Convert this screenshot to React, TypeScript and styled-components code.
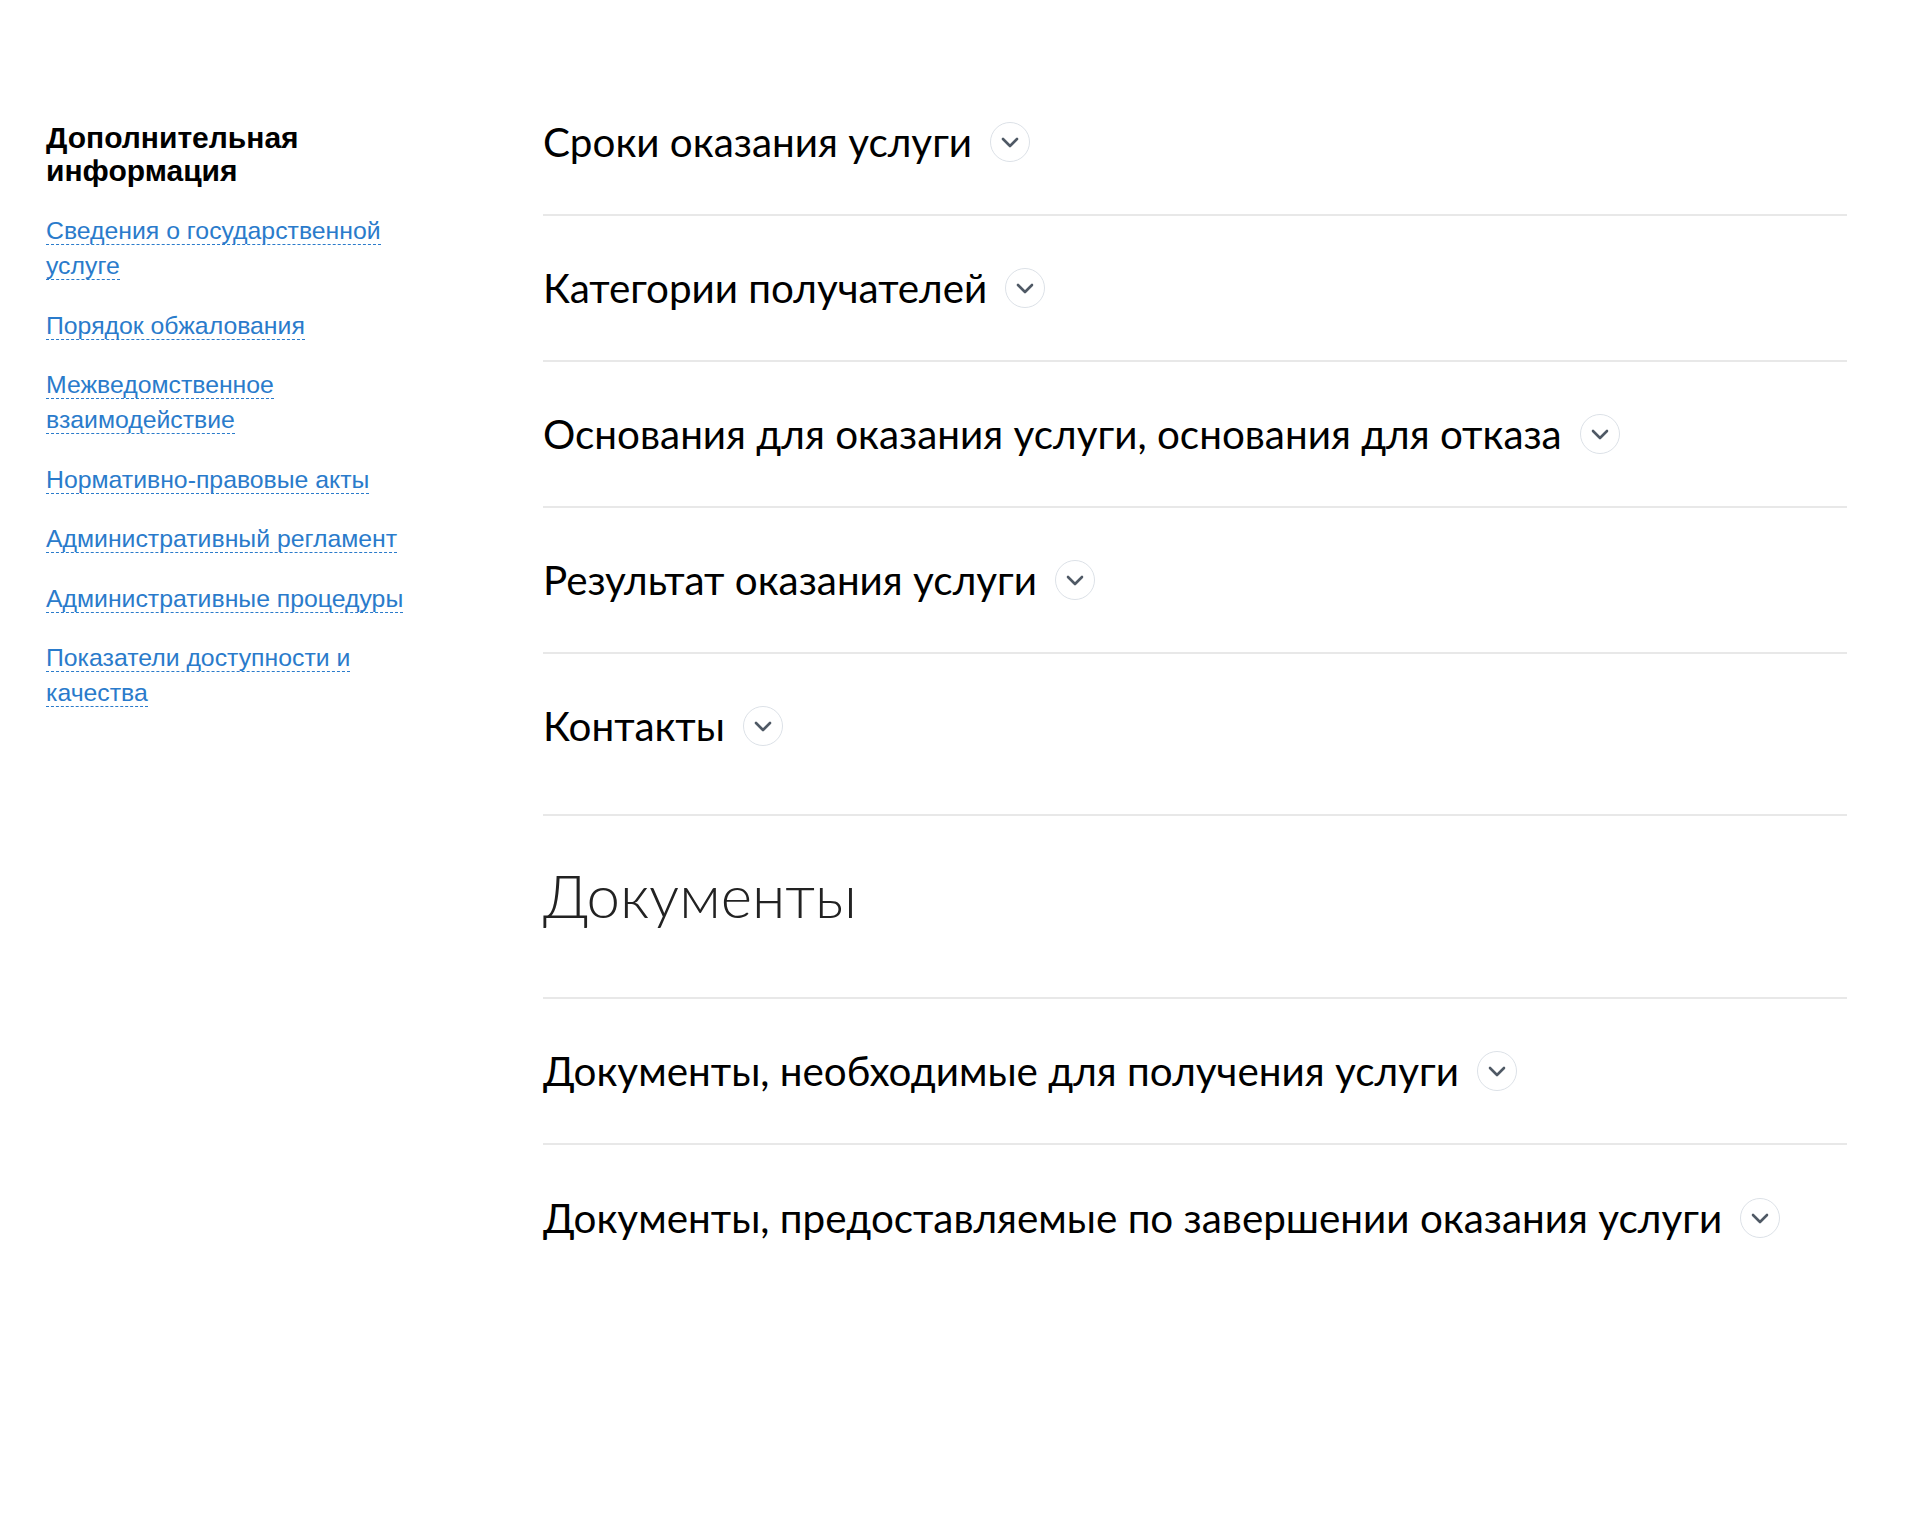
import styled, { createGlobalStyle } from 'styled-components'

const GlobalStyle = createGlobalStyle`
  html, body {
    margin: 0;
    padding: 0;
    background: #fff;
  }
  body {
    font-family: Lato, "Noto Sans", sans-serif;
    color: #000;
  }
`

const Page = styled.div`
  display: grid;
  grid-template-columns: 380px 1304px;
  column-gap: 117px;
  padding: 70px 0 200px 46px;
  align-items: start;
`

const Sidebar = styled.aside`
  padding-top: 51px;
  font-family: "Liberation Sans", Arial, sans-serif;
`

const SideTitle = styled.h3`
  margin: 0 0 26px;
  font-size: 30px;
  line-height: 33px;
  font-weight: 700;
  color: #000;
`

const SideList = styled.ul`
  list-style: none;
  margin: 0;
  padding: 0;
  display: flex;
  flex-direction: column;
  gap: 24.5px;
`

const SideItem = styled.li`
  font-size: 24.8px;
  line-height: 35px;
`

const SideLink = styled.a`
  color: #2a7bcb;
  text-decoration: none;
  border-bottom: 1px dashed #2a7bcb;
  cursor: pointer;
`

const Main = styled.main`
  display: flex;
  flex-direction: column;
`

const Row = styled.div<{ $height: number; $last?: boolean }>`
  box-sizing: border-box;
  height: ${({ $height }) => $height}px;
  display: flex;
  align-items: center;
  border-bottom: ${({ $last }) => ($last ? 'none' : '2px solid #e8e8e8')};
`

const RowInner = styled.div<{ $shift?: number }>`
  display: flex;
  align-items: center;
  gap: 18px;
  margin-top: ${({ $shift }) => $shift ?? 0}px;
`

const RowTitle = styled.h2`
  margin: 0;
  font-family: Lato, "Noto Sans", sans-serif;
  font-weight: 400;
  font-size: 40.4px;
  line-height: 48px;
  color: #000;
`

const SectionTitle = styled.h1`
  margin: 0;
  font-family: Lato, "Noto Sans", sans-serif;
  font-weight: 300;
  font-size: 60px;
  line-height: 70px;
  color: #222;
`

const Toggle = styled.button`
  width: 40px;
  height: 40px;
  padding: 0;
  border: none;
  background: transparent;
  display: flex;
  cursor: pointer;
  flex-shrink: 0;
`

function Chevron() {
  return (
    <svg width="40" height="40" viewBox="0 0 40 40" fill="none">
      <circle cx="20" cy="20" r="19.5" stroke="#dce1e7" strokeWidth="1" />
      <path d="M13 17L20 24L27 17" stroke="#4f5965" strokeWidth="2.6" strokeLinecap="round" strokeLinejoin="round" />
    </svg>
  )
}

const links = [
  'Сведения о государственной услуге',
  'Порядок обжалования',
  'Межведомственное взаимодействие',
  'Нормативно-правовые акты',
  'Административный регламент',
  'Административные процедуры',
  'Показатели доступности и качества',
]

function AccordionRow({ title, height = 146, shift, last }: { title: string; height?: number; shift?: number; last?: boolean }) {
  return (
    <Row $height={height} $last={last}>
      <RowInner $shift={shift}>
        <RowTitle>{title}</RowTitle>
        <Toggle type="button" aria-label="Развернуть">
          <Chevron />
        </Toggle>
      </RowInner>
    </Row>
  )
}

export default function App() {
  return (
    <>
      <GlobalStyle />
      <Page>
        <Sidebar>
          <SideTitle>Дополнительная информация</SideTitle>
          <SideList>
            {links.map((l) => (
              <SideItem key={l}>
                <SideLink>{l}</SideLink>
              </SideItem>
            ))}
          </SideList>
        </Sidebar>
        <Main>
          <AccordionRow title="Сроки оказания услуги" />
          <AccordionRow title="Категории получателей" />
          <AccordionRow title="Основания для оказания услуги, основания для отказа" />
          <AccordionRow title="Результат оказания услуги" />
          <AccordionRow title="Контакты" height={162} shift={-16} />
          <Row $height={183}>
            <RowInner $shift={-23}>
              <SectionTitle>Документы</SectionTitle>
            </RowInner>
          </Row>
          <AccordionRow title="Документы, необходимые для получения услуги" />
          <AccordionRow title="Документы, предоставляемые по завершении оказания услуги" last />
        </Main>
      </Page>
    </>
  )
}
